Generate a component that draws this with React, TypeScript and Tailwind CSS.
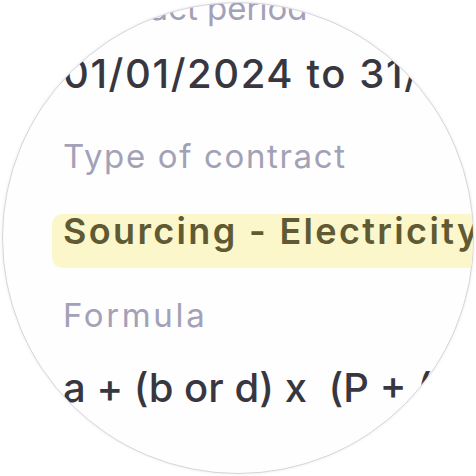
import React from 'react';

const font = { fontFamily: 'Inter, "Noto Sans", sans-serif' };

function Label({ children, className = '' }: { children: React.ReactNode; className?: string }) {
  return <div className={`whitespace-nowrap text-[33px] leading-[40px] font-normal text-[#a3a1b6] ${className}`}>{children}</div>;
}

export default function App() {
  return (
    <div className="h-[476px] w-[476px] overflow-hidden bg-white" style={font}>
      <div className="m-[2px] h-[472px] w-[472px] overflow-hidden rounded-full border border-[#d6d5de] bg-[#fefeff] shadow-[0_0_3px_rgba(150,148,180,0.2)]">
        <div className="flex flex-col pl-[60px]">
          <Label className="mt-[-15px]">Contract period</Label>
          <div className="mt-[22px] whitespace-nowrap text-[40px] leading-[48px] font-medium tracking-[0.04em] text-[#38373f]">
            01/01/2024 to 31/12/2024
          </div>
          <Label className="mt-[38px] tracking-[0.05em]">Type of contract</Label>
          <div className="ml-[-11px] mt-[38px] h-[54px] rounded-l-[10px] bg-[#fcf7ca] pl-[11px]">
            <div className="mt-[-1px] whitespace-nowrap text-[36px] leading-[36px] font-semibold tracking-[0.065em] text-[#5f5a33]">
              Sourcing - Electricity
            </div>
          </div>
          <Label className="mt-[27px] tracking-[0.08em]">Formula</Label>
          <div className="mt-[29px] whitespace-pre text-[40px] leading-[48px] font-medium text-[#38373f]">
            {'a + (b or d) x  (P + (c x I))'}
          </div>
        </div>
      </div>
    </div>
  );
}
